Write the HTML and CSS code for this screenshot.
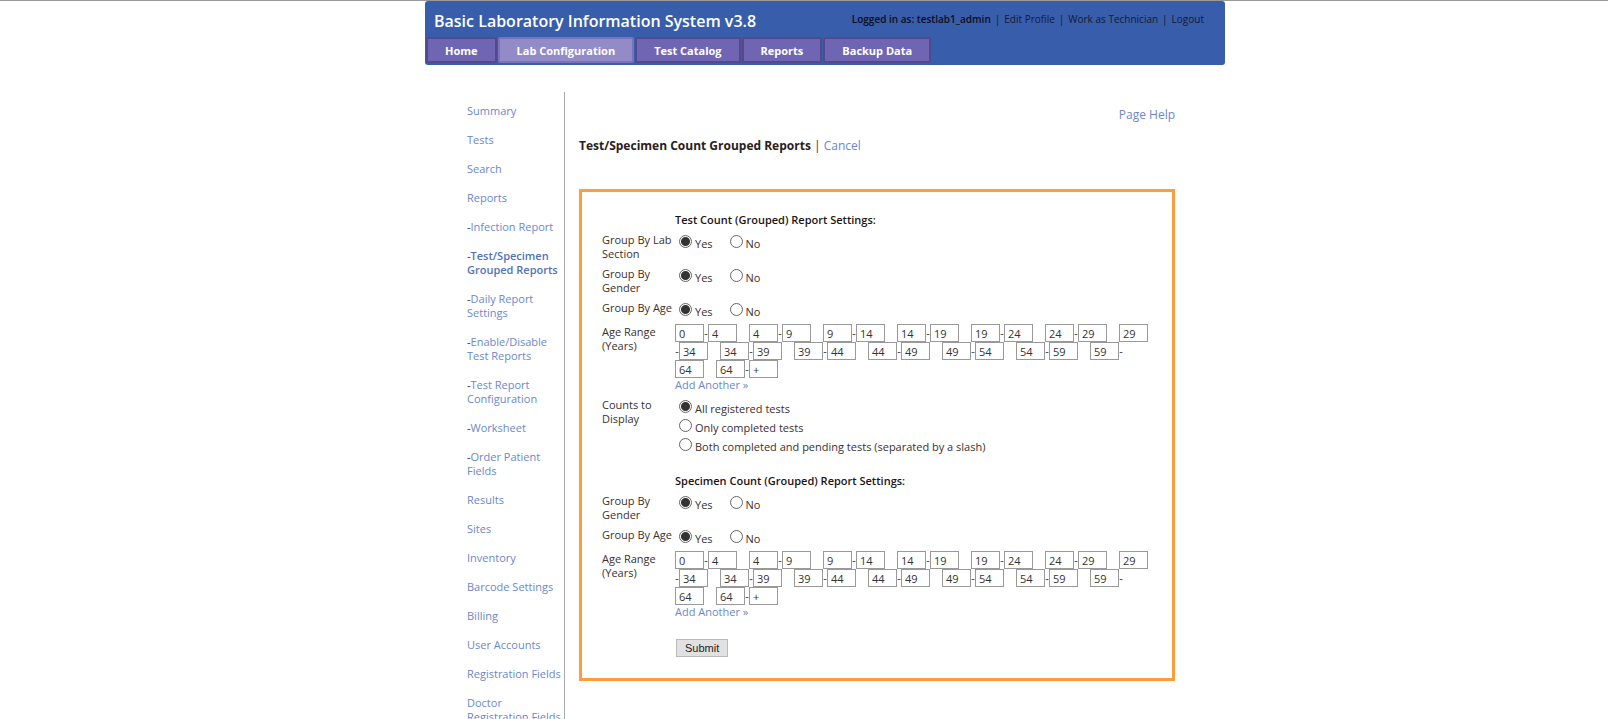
FILE: index.html
```
<!DOCTYPE html>
<html lang="en">
<head>
<meta charset="utf-8">
<title>Basic Laboratory Information System</title>
<link rel="stylesheet" href="styles.css">
</head>
<body>
<div class="page">
  <header class="header">
    <div class="header-top">
      <h1 class="brand">Basic Laboratory Information System v3.8</h1>
      <div class="user-links"><b>Logged in as: testlab1_admin</b><span>|</span><a href="#">Edit Profile</a><span>|</span><a href="#">Work as Technician</a><span>|</span><a href="#">Logout</a></div>
    </div>
    <nav class="tabs">
      <a class="tab" href="#">Home</a>
      <a class="tab active" href="#">Lab Configuration</a>
      <a class="tab" href="#">Test Catalog</a>
      <a class="tab" href="#">Reports</a>
      <a class="tab" href="#">Backup Data</a>
    </nav>
  </header>
  <div class="body">
    <nav class="side">
      <div><a href="#">Summary</a></div>
      <div><a href="#">Tests</a></div>
      <div><a href="#">Search</a></div>
      <div><a href="#">Reports</a></div>
      <div>-<a href="#">Infection Report</a></div>
      <div>-<a class="current" href="#">Test/Specimen<br>Grouped Reports</a></div>
      <div>-<a href="#">Daily Report<br>Settings</a></div>
      <div>-<a href="#">Enable/Disable<br>Test Reports</a></div>
      <div>-<a href="#">Test Report<br>Configuration</a></div>
      <div>-<a href="#">Worksheet</a></div>
      <div>-<a href="#">Order Patient<br>Fields</a></div>
      <div><a href="#">Results</a></div>
      <div><a href="#">Sites</a></div>
      <div><a href="#">Inventory</a></div>
      <div><a href="#">Barcode Settings</a></div>
      <div><a href="#">Billing</a></div>
      <div><a href="#">User Accounts</a></div>
      <div><a href="#">Registration Fields</a></div>
      <div><a href="#">Doctor<br>Registration Fields</a></div>
    </nav>
    <main class="main">
      <div class="help"><a href="#">Page Help</a></div>
      <div class="title"><h2>Test/Specimen Count Grouped Reports</h2> | <a href="#">Cancel</a></div>
      <form class="panel">
        <section class="group">
          <h3>Test Count (Grouped) Report Settings:</h3>
          <div class="row">
            <span class="name">Group By Lab<br>Section</span>
            <div class="choices">
              <label><input type="radio" name="t-section" checked>Yes</label>
              <label><input type="radio" name="t-section">No</label>
            </div>
          </div>
          <div class="row">
            <span class="name">Group By<br>Gender</span>
            <div class="choices">
              <label><input type="radio" name="t-gender" checked>Yes</label>
              <label><input type="radio" name="t-gender">No</label>
            </div>
          </div>
          <div class="row">
            <span class="name">Group By Age</span>
            <div class="choices">
              <label><input type="radio" name="t-age" checked>Yes</label>
              <label><input type="radio" name="t-age">No</label>
            </div>
          </div>
          <div class="row">
            <span class="name">Age Range<br>(Years)</span>
            <div>
              <div class="ranges" data-label="Test age"></div>
              <a class="add" href="#">Add Another »</a>
            </div>
          </div>
          <div class="row">
            <span class="name">Counts to<br>Display</span>
            <div class="choices stacked">
              <label><input type="radio" name="t-count" checked>All registered tests</label>
              <label><input type="radio" name="t-count">Only completed tests</label>
              <label><input type="radio" name="t-count">Both completed and pending tests (separated by a slash)</label>
            </div>
          </div>
        </section>
        <section class="group">
          <h3>Specimen Count (Grouped) Report Settings:</h3>
          <div class="row">
            <span class="name">Group By<br>Gender</span>
            <div class="choices">
              <label><input type="radio" name="s-gender" checked>Yes</label>
              <label><input type="radio" name="s-gender">No</label>
            </div>
          </div>
          <div class="row">
            <span class="name">Group By Age</span>
            <div class="choices">
              <label><input type="radio" name="s-age" checked>Yes</label>
              <label><input type="radio" name="s-age">No</label>
            </div>
          </div>
          <div class="row">
            <span class="name">Age Range<br>(Years)</span>
            <div>
              <div class="ranges" data-label="Specimen age"></div>
              <a class="add" href="#">Add Another »</a>
            </div>
          </div>
        </section>
        <button class="submit" type="submit">Submit</button>
      </form>
    </main>
  </div>
</div>
<script src="ranges.js"></script>
</body>
</html>
```
FILE: styles.css
```
* { box-sizing: border-box; }
body {
  margin: 0;
  height: 100vh;
  overflow: hidden;
  border-top: 1px solid #999;
  padding-left: 42px;
  background: #fff;
  color: #3a3030;
  font-family: "Open Sans", "Noto Sans", sans-serif;
  font-size: 11px;
  line-height: 14px;
}
a { color: #6b88cb; text-decoration: none; }
h1, h2, h3 { margin: 0; }
.page { max-width: 800px; margin: 0 auto; }
.header {
  background: #385dab;
  border-radius: 3px;
  padding-bottom: 2px;
}
.header-top {
  display: flex;
  justify-content: space-between;
  height: 36px;
  padding: 7px 21px 0 9px;
}
.brand { color: #fff; font-size: 16px; line-height: 26px; font-weight: 600; }
.user-links { display: flex; gap: 4px; color: #141a30; font-size: 10px; line-height: 22px; }
.user-links b { color: #0a0d1a; font-weight: 600; }
.user-links a { color: #141a30; }
.tabs { display: flex; padding-left: 1px; gap: 1px; }
.tab {
  border: 2px solid #54498c;
  border-radius: 2px;
  background: #7065b2;
  color: #fff;
  font-size: 11px;
  line-height: 20px;
  font-weight: 700;
  padding: 2px 17px 0;
}
.tab.active { background: #938bc8; border-color: #7b72bb; }
.body { display: flex; align-items: flex-start; padding: 27px 50px 0 42px; }
.side {
  flex: 0 0 98px;
  display: flex;
  flex-direction: column;
  gap: 15px;
  padding: 12px 0 15px;
  border-right: 1px solid #aaa;
  white-space: nowrap;
}
.side .current { font-weight: 600; color: #5072bd; }
.main { flex: 1; padding: 15px 0 0 14px; font-size: 12px; }
.help { text-align: right; line-height: 16px; }
.title { margin-top: 15px; line-height: 16px; }
.title h2 { display: inline; font-size: 12px; color: #2a2020; }
.panel {
  margin-top: 35px;
  padding: 21px 21px 21px 20px;
  border: 3px solid #ff9c3c;
  font-size: 11px;
}
.group { display: flex; flex-direction: column; gap: 6px; margin-bottom: 20px; }
h3 { margin-left: 73px; font-size: 11px; line-height: 14px; font-weight: 600; color: #1c1414; }
.row { display: grid; grid-template-columns: 73px 1fr; }
.name { white-space: nowrap; }
.choices { display: flex; gap: 17px; padding-left: 4px; }
.choices label { display: flex; gap: 3px; height: 18px; line-height: 22px; }
.choices.stacked { flex-direction: column; gap: 1px; }
input[type="radio"] {
  appearance: none;
  width: 13px;
  height: 13px;
  margin: 2px 0 0;
  border: 1px solid #666;
  border-radius: 50%;
  background: #fff;
}
input[type="radio"]:checked { background: radial-gradient(circle, #333 0 4px, #fff 5px); }
.ranges { display: flex; flex-wrap: wrap; margin-top: -1px; }
.age {
  width: 29px;
  height: 18px;
  border: 1px solid #999;
  padding: 0 3px;
  background: #fff;
  color: #333;
  font: 11px/16px "Open Sans", "Noto Sans", sans-serif;
}
.age.from { margin-left: 12px; }
.age.from:first-child { margin-left: 0; }
.dash { width: 4px; line-height: 18px; text-align: center; }
.add { display: inline-block; }
.submit {
  display: block;
  margin: 0 0 0 74px;
  height: 18px;
  padding: 0 8px;
  border: 1px solid #bbb;
  background: #e1e1e1;
  color: #222;
  font: 11px/16px "Liberation Sans", Arial, sans-serif;
}
```
FILE: ranges.js
```
const bounds = ["0", "4", "9", "14", "19", "24", "29", "34", "39", "44", "49", "54", "59", "64", "+"];

document.querySelectorAll(".ranges").forEach((box) => {
  const addInput = (value, kind) => {
    const input = document.createElement("input");
    input.type = "text";
    input.className = "age " + kind;
    input.value = value;
    input.setAttribute("aria-label", box.dataset.label + " " + kind);
    box.append(input);
  };
  for (let i = 0; i < bounds.length - 1; i++) {
    addInput(bounds[i], "from");
    const dash = document.createElement("span");
    dash.className = "dash";
    dash.textContent = "-";
    box.append(dash);
    addInput(bounds[i + 1], "to");
  }
});
```
